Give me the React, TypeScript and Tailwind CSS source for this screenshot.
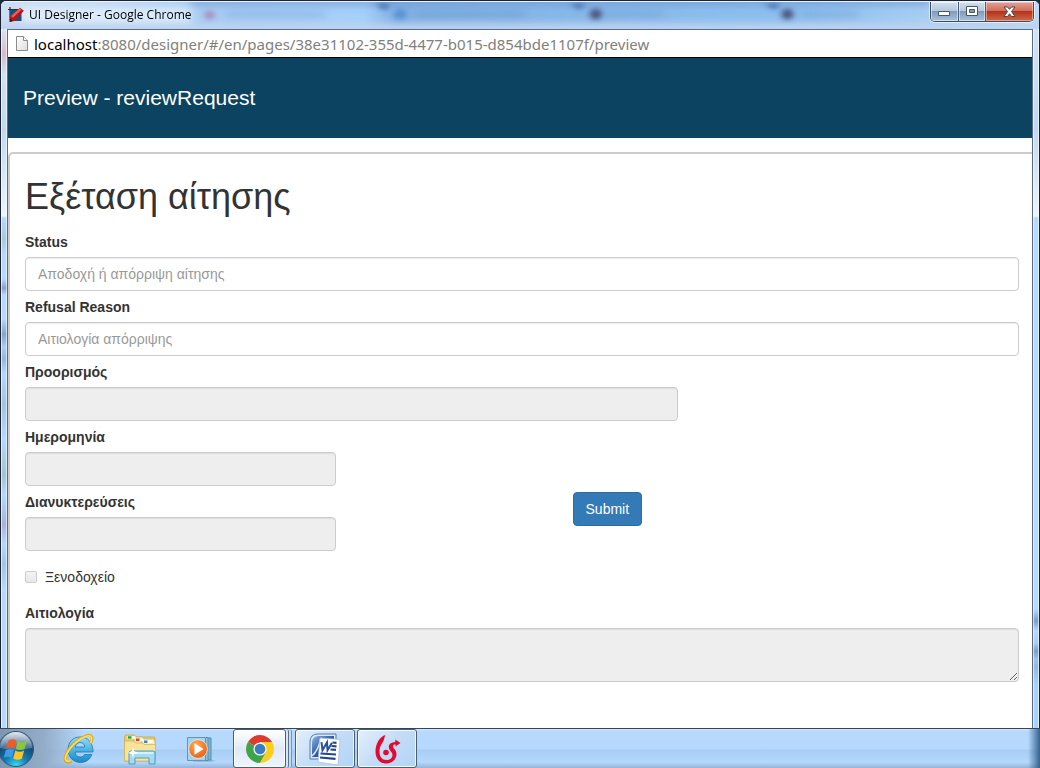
import { useState, type ReactNode } from "react";

const inputClass =
  "block h-[34px] w-full rounded border border-[#cccccc] px-3 text-sm text-[#555555] shadow-[inset_0_1px_1px_rgba(0,0,0,0.075)] outline-none placeholder:text-[#999999] disabled:bg-[#eeeeee]";

type FieldProps = {
  id: string;
  label: string;
  placeholder?: string;
  disabled?: boolean;
};

function Field({ id, label, placeholder, disabled = false }: FieldProps) {
  const [value, setValue] = useState("");

  return (
    <div>
      <label htmlFor={id} className="mb-[5px] block text-sm font-bold">
        {label}
      </label>
      <input
        id={id}
        type="text"
        value={value}
        placeholder={placeholder}
        disabled={disabled}
        onChange={(e) => setValue(e.target.value)}
        className={inputClass}
      />
    </div>
  );
}

function DesignerIcon() {
  return (
    <svg width="16" height="16" viewBox="0 0 16 16">
      <path d="M2 0v13M0 2.500h14" stroke="#26333f" strokeWidth="1.200" fill="none" />
      <rect x="2" y="3" width="11.500" height="11" fill="#1f4f74" />
      <path d="M1.500 15l.8-5.500L12 .8l3.800 3L6.500 14z" fill="#b91519" />
      <path d="M3 9L11.800 1.300l1.700 1.500L4.800 10.800z" fill="#ef5d57" />
      <path d="M1.500 15l.6-3.500 2.700 2.500z" fill="#3a1717" />
    </svg>
  );
}

function PageIcon() {
  return (
    <svg width="12" height="16" viewBox="0 0 12 16">
      <defs>
        <linearGradient id="sheet" x1="0" y1="0" x2="1" y2="1">
          <stop offset="0" stopColor="#fff" />
          <stop offset="1" stopColor="#dedede" />
        </linearGradient>
      </defs>
      <path d="M.5 .5h7l4 4v10H.5z" fill="url(#sheet)" stroke="#8b8b8b" />
      <path d="M7.500 .5v4h4" fill="#fff" stroke="#8b8b8b" />
    </svg>
  );
}

// The windows behind show through the glass as soft blobs
function GlassBackdrop() {
  return (
    <svg
      className="absolute inset-0 h-full w-full"
      viewBox="0 0 1040 29"
      preserveAspectRatio="none"
      aria-hidden="true"
    >
      <defs>
        <filter id="soft" x="-20%" y="-100%" width="140%" height="300%">
          <feGaussianBlur stdDeviation="4" />
        </filter>
        <filter id="dot" x="-100%" y="-100%" width="300%" height="300%">
          <feGaussianBlur stdDeviation="3" />
        </filter>
        <linearGradient id="glass" x1="0" y1="0" x2="1" y2="0">
          <stop offset="0" stopColor="#cfdff2" />
          <stop offset="0.100" stopColor="#c3daf4" />
          <stop offset="0.200" stopColor="#a9cdf3" />
          <stop offset="0.350" stopColor="#a5d0fa" />
          <stop offset="0.380" stopColor="#83b2e5" />
          <stop offset="0.780" stopColor="#8fc1f0" />
          <stop offset="0.880" stopColor="#a5cdf3" />
          <stop offset="1" stopColor="#c0d9f2" />
        </linearGradient>
      </defs>
      <rect width="1040" height="29" fill="url(#glass)" />
      <g filter="url(#soft)">
        <rect x="190" y="-3" width="740" height="7" fill="#7199d2" opacity="0.700" />
        <rect x="-10" y="23" width="1060" height="12" fill="#bdd3f0" />
        <rect x="415" y="10" width="110" height="7" fill="#6796cd" opacity="0.500" />
        <rect x="605" y="10" width="60" height="7" fill="#6796cd" opacity="0.400" />
        <rect x="800" y="10" width="60" height="7" fill="#6796cd" opacity="0.400" />
        <rect x="225" y="10" width="100" height="7" fill="#7ca8dd" opacity="0.500" />
        <rect x="20" y="6" width="170" height="16" fill="#e4f0fc" opacity="0.800" />
      </g>
      <g filter="url(#dot)">
        <circle cx="209" cy="14" r="5" fill="#a48ac0" />
        <circle cx="400" cy="13" r="6" fill="#5c8dd2" />
        <circle cx="596" cy="13" r="6" fill="#49517d" />
        <circle cx="788" cy="13" r="6" fill="#49517d" />
        <path d="M375 2h15l-5 7zM570 2h16l-6 6zM765 2h16l-6 6z" fill="#3c69a7" />
      </g>
    </svg>
  );
}

function WindowButtons() {
  const glass =
    "bg-[linear-gradient(#d3dfec_0%,#b6c8dc_45%,#819bb9_50%,#a9c2dd_100%)]";

  return (
    <div className="relative mr-[5px] flex h-5 overflow-hidden rounded-b-[5px] border border-t-0 border-[#3d4c62] shadow-[0_0_0_1px_rgba(255,255,255,0.6)]">
      <button
        aria-label="Minimize"
        className={`flex w-7 items-center justify-center border-r border-[#4b5c74] shadow-[inset_0_0_0_1px_rgba(255,255,255,0.5)] ${glass}`}
      >
        <svg width="13" height="11" viewBox="0 0 13 11">
          <path d="M.5 5.500h11v4H.5z" fill="#fff" stroke="#4c5766" />
        </svg>
      </button>
      <button
        aria-label="Maximize"
        className={`flex w-[27px] items-center justify-center border-r border-[#4b5c74] shadow-[inset_0_0_0_1px_rgba(255,255,255,0.5)] ${glass}`}
      >
        <svg width="13" height="11" viewBox="0 0 13 11">
          <path d="M.5 .5h11v9H.5z" fill="#fff" stroke="#4c5766" />
          <path d="M3.500 3.500h5v3h-5z" fill="#7f9cc0" stroke="#4c5766" />
        </svg>
      </button>
      <button
        aria-label="Close"
        className="flex w-[47px] items-center justify-center bg-[linear-gradient(#e2a297_0%,#d1705c_45%,#b3341c_50%,#cd6a45_100%)] shadow-[inset_0_0_0_1px_rgba(255,255,255,0.4)]"
      >
        <svg width="13" height="12" viewBox="0 0 13 12">
          <path
            d="M1 1h3.500l2 2.300L8.500 1H12L8.500 5.500 12 10.500H8.500l-2-2.700-2 2.700H1l3.500-5z"
            fill="#fff"
            stroke="#53434e"
          />
        </svg>
      </button>
    </div>
  );
}

function StartOrb() {
  return (
    <svg width="36" height="38" viewBox="0 0 36 38">
      <defs>
        <radialGradient id="orb" cx=".5" cy="1" r=".95">
          <stop offset="0" stopColor="#3fe0fa" />
          <stop offset=".35" stopColor="#137fb4" />
          <stop offset=".7" stopColor="#164a78" />
          <stop offset="1" stopColor="#7795ae" />
        </radialGradient>
        <linearGradient id="orbShine" x1="0" y1="0" x2="0" y2="1">
          <stop offset="0" stopColor="#e9f0f6" stopOpacity=".9" />
          <stop offset="1" stopColor="#9db3c6" stopOpacity=".3" />
        </linearGradient>
      </defs>
      <circle cx="16" cy="19" r="17.500" fill="url(#orb)" stroke="#34536e" />
      <path d="M0 18A16 16 0 0 1 32 18Q16 22 0 18z" fill="url(#orbShine)" />
      <path d="M8.500 10.500q4-2.500 8 0l-2 8q-4-2.200-8.300.2z" fill="#ef5a29" />
      <path d="M17.800 11q4.500 2.500 9-.3l-2.300 8.200q-4.300 2.400-8.700-.2z" fill="#8cc63f" />
      <path d="M5.800 20.200q4-2.500 8.200-.2l-2.200 8q-3.800-2.300-8-.2z" fill="#3f9be5" />
      <path d="M15.300 20.500q4.400 2.500 8.800.1l-2.200 8.200q-4.300 2.200-8.700-.3z" fill="#fdc525" />
    </svg>
  );
}

function ExplorerIcon() {
  return (
    <svg width="32" height="32" viewBox="0 0 32 32">
      <defs>
        <linearGradient id="ie" x1="0" y1="0" x2="0" y2="1">
          <stop offset="0" stopColor="#8ddcfa" />
          <stop offset="1" stopColor="#1589cc" />
        </linearGradient>
      </defs>
      <path
        d="M17 4C9.500 4 5 9.500 5 16.500S10 29.500 17.500 29.500c5.500 0 9.500-3 11.300-8h-7.300c-1 1.700-2.300 2.500-4.300 2.500-3 0-5-2-5.200-5h18C30 9.500 25 4 17 4zM12.200 14c.5-2.800 2.300-4.500 4.900-4.500s4.300 1.700 4.600 4.500z"
        fill="url(#ie)"
        stroke="#1578b6"
        strokeWidth=".8"
      />
      <path
        d="M27.500 10.500C31 4 28.500 .8 22.500 3 14.500 6 5.500 14 2.500 23c-1.700 5.300.8 7.500 6.200 5"
        fill="none"
        stroke="#e6a50b"
        strokeWidth="2.800"
      />
      <path
        d="M27.500 10C30.300 4.200 28 1.500 22.500 3.500 14.500 6.500 6 14.500 2.800 23c-1.400 4.500.6 6.200 5.400 4.600"
        fill="none"
        stroke="#ffe25c"
        strokeWidth="1.500"
      />
    </svg>
  );
}

function FoldersIcon() {
  return (
    <svg width="32" height="32" viewBox="0 0 32 32">
      <path d="M.5 4q0-2 2-2h8L12 4h18q1 0 1 1v23H.5z" fill="#e9cd72" stroke="#c5a13f" strokeWidth=".7" />
      <path d="M10 4h9l1 3h10v18H10z" fill="#f6e4a0" stroke="#c8a84e" strokeWidth=".6" />
      <path d="M18 6h12l1 3v16H18z" fill="#fbeeb9" stroke="#c8a84e" strokeWidth=".6" />
      <path d="M.5 8h9l2 2h7l2 1.500H31.500V28H.5z" fill="#f8e39a" stroke="#cfaf57" strokeWidth=".7" />
      <path d="M3.500 3.200h8v2.500h-8z" fill="#fff" />
      <path d="M4 3.200h3.500v2.500H4z" fill="#1fae36" />
      <path d="M11.500 5.500h8V8h-8z" fill="#fff" />
      <path d="M12 5.500h3.500V8H12z" fill="#d7402b" />
      <path d="M19.500 7.500h9V10h-9z" fill="#fff" />
      <path d="M20 7.500h3.500V10H20z" fill="#2e8ad8" />
      <path d="M5 31V20q0-2 2-2h22q2 0 2 2v11h-6v-6H11v6z" fill="#a6daef" stroke="#4c9cc5" />
      <path d="M6.500 20h23" stroke="#e4f8ff" strokeWidth="1.500" />
      <path d="M9 14l1 4 4 2-4 1-1 4-1-4-4-1 4-2z" fill="#fff" />
    </svg>
  );
}

function MediaIcon() {
  return (
    <svg width="32" height="32" viewBox="0 0 32 32">
      <defs>
        <radialGradient id="play" cx=".4" cy=".3" r=".8">
          <stop offset="0" stopColor="#ffae55" />
          <stop offset="1" stopColor="#e5560c" />
        </radialGradient>
      </defs>
      <path d="M8 27h23l-4 2H8z" fill="#7390ad" opacity=".4" />
      <path d="M9 5h17v22H9z" fill="#7ab5d4" stroke="#548eae" />
      <path d="M6 4.500h17v23H6z" fill="#8fc6e0" stroke="#548eae" />
      <path d="M2.500 4.500h18v23h-18z" fill="#a5d4ea" stroke="#6098b6" />
      <circle cx="13" cy="16" r="9.300" fill="url(#play)" stroke="#fff" strokeWidth=".6" />
      <path d="M9.500 10.200l9 5.800-9 5.800z" fill="#fff" />
    </svg>
  );
}

function ChromeIcon() {
  return (
    <svg width="30" height="30" viewBox="0 0 30 30">
      <path d="M15 15L2.900 8A14 14 0 0 1 27.100 8H15z" fill="#dc3b2e" />
      <path d="M15 15L2.900 8A14 14 0 0 0 15 29l6-10.500z" fill="#3fa447" />
      <path d="M15 8h12.100A14 14 0 0 1 15 29l6.100-10.500z" fill="#fccd1b" />
      <circle cx="15" cy="15" r="6.600" fill="#f3f6f8" />
      <circle cx="15" cy="15" r="5.300" fill="#3b7dc4" />
    </svg>
  );
}

function WordIcon() {
  return (
    <svg width="34" height="34" viewBox="0 0 34 34">
      <defs>
        <linearGradient id="word" x1="0" y1="0" x2="1" y2="1">
          <stop offset="0" stopColor="#8db4e6" />
          <stop offset=".5" stopColor="#2f5ba8" />
          <stop offset="1" stopColor="#24468c" />
        </linearGradient>
      </defs>
      <path d="M2 27V10q0-8 8-8h18v25z" fill="#dbe8f8" stroke="#5577b5" />
      <path d="M4 25V11q0-7 7-7h15v21z" fill="url(#word)" />
      <path d="M4 24q6-5 9-18" fill="none" stroke="#dce9f9" strokeWidth="1.500" />
      <path d="M12 6l20 1.500-2 25.500-20-3z" fill="#fff" stroke="#aebfd8" strokeWidth=".8" />
      <path d="M13.500 10.200l1 8 4.500-7.800.5 7.800 4.500-7.500" fill="none" stroke="#284f9b" strokeWidth="2" />
      <path
        d="M24.500 10.500l4 .3M23.500 14l5 .3M22.500 17.500l5.500.4M12.500 21.500l15.500 1M12 25.500l15.500 1.300"
        stroke="#24468c"
        strokeWidth="2.200"
      />
    </svg>
  );
}

function BonitaIcon() {
  return (
    <svg width="28" height="32" viewBox="0 0 28 32">
      <path
        d="M12.500 2C6.500 3.500 2.500 11 2.500 18.500 2.500 26 7 30.500 13 30.500c6 0 10.500-4 10.500-9.500 0-4.500-3.800-5.500-3.500-8 .2-1.200 1.200-1.700 2.500-1.800v2.300l5-3.500-5.200-3.500V9c-4.300.2-6.500 2-6.500 5 0 4 3.700 4.500 3.700 8 0 3-2.700 5-6 5C9 27 6.500 24 6.500 18.500c0-6 3.500-8.500 4.500-12C11.600 4.500 11.800 3 12.500 2z"
        fill="#e30a30"
      />
      <circle cx="13" cy="19.500" r="2.800" fill="#e30a30" />
    </svg>
  );
}

function TaskButton({ label, active, children }: { label: string; active?: boolean; children: ReactNode }) {
  const tone = active
    ? "bg-[linear-gradient(#ffffff,#dfe9f5_50%,#eef5fd)]"
    : "bg-[linear-gradient(135deg,#e3effc,#c3dcf7_50%,#b3d4f6)]";

  return (
    <button
      aria-label={label}
      className={`flex h-[39px] items-center justify-center rounded-[3px] border border-[#4a5d73] shadow-[inset_0_0_0_1px_rgba(255,255,255,0.8)] ${active ? "w-[53px]" : "w-[60px]"} ${tone}`}
    >
      {children}
    </button>
  );
}

function Taskbar() {
  return (
    <footer className="flex h-10 border-t border-[#34455c] bg-[linear-gradient(#d6e9fd_0,#b7d9fc_2px,#b5d8fc_50%,#a9cdf3_55%,#b5d8fd_85%,#95b4d6)]">
      <div className="flex w-full items-center bg-[linear-gradient(90deg,#7e96af_0,#94aeca_45px,transparent_85px,transparent_calc(100%-12px),#35628f)]">
        <button aria-label="Start" className="mr-[27px]">
          <StartOrb />
        </button>
        <div className="flex items-center gap-[29px]">
          <button aria-label="Internet Explorer">
            <ExplorerIcon />
          </button>
          <button aria-label="Windows Explorer">
            <FoldersIcon />
          </button>
          <button aria-label="Media Player">
            <MediaIcon />
          </button>
        </div>
        <div className="ml-4 flex items-center gap-[2px]">
          <div className="flex pr-px">
            <TaskButton label="Google Chrome" active>
              <ChromeIcon />
            </TaskButton>
            <span className="h-[39px] w-[3px] rounded-r border-r border-[#5b7088] bg-[#d5e6f8]" />
            <span className="h-[39px] w-[3px] rounded-r border-r border-[#7a92ad] bg-[#c5dcf5]" />
          </div>
          <TaskButton label="Microsoft Word">
            <WordIcon />
          </TaskButton>
          <TaskButton label="Bonita">
            <BonitaIcon />
          </TaskButton>
        </div>
      </div>
    </footer>
  );
}

function ReviewForm() {
  const [note, setNote] = useState("");

  return (
    <form
      onSubmit={(e) => e.preventDefault()}
      className="-mr-1 mt-[14px] flex-1 rounded-t-[5px] border-2 border-b-0 border-[#cccccc] px-[15px] pb-10 text-[#333333]"
    >
      <h1 className="mt-[23px] mb-[15px] text-4xl leading-10">Εξέταση αίτησης</h1>

      <div className="flex flex-col gap-[6px]">
        <Field id="status" label="Status" placeholder="Αποδοχή ή απόρριψη αίτησης" />
        <Field id="refusal" label="Refusal Reason" placeholder="Αιτιολογία απόρριψης" />

        <div className="grid grid-cols-12 gap-x-[30px]">
          <div className="col-span-8">
            <Field id="destination" label="Προορισμός" disabled />
          </div>
        </div>
        <div className="grid grid-cols-12 gap-x-[30px]">
          <div className="col-span-4">
            <Field id="date" label="Ημερομηνία" disabled />
          </div>
        </div>
        <div className="grid grid-cols-12 gap-x-[30px]">
          <div className="col-span-4">
            <Field id="nights" label="Διανυκτερεύσεις" disabled />
          </div>
          <div className="col-span-6 text-center">
            <button
              type="submit"
              className="h-[34px] rounded border border-[#2e6da4] bg-[#337ab7] px-3 text-sm text-white hover:bg-[#286090]"
            >
              Submit
            </button>
          </div>
        </div>
      </div>

      <label className="my-4 flex items-center gap-2 text-sm">
        <input
          type="checkbox"
          disabled
          className="h-3 w-3 appearance-none rounded-[2px] border border-[#cccccc] bg-linear-to-b from-[#f4f4f4] to-[#e8e8e8]"
        />
        Ξενοδοχείο
      </label>

      <label htmlFor="justification" className="mb-[5px] block text-sm font-bold">
        Αιτιολογία
      </label>
      <textarea
        id="justification"
        rows={2}
        disabled
        value={note}
        onChange={(e) => setNote(e.target.value)}
        className="block h-[54px] w-full resize-y rounded border border-[#cccccc] bg-[#eeeeee] px-3 py-[6px] text-sm shadow-[inset_0_1px_1px_rgba(0,0,0,0.075)]"
      />
    </form>
  );
}

export default function App() {
  return (
    <div className="flex min-h-screen flex-col bg-[#1c2b40] font-['Liberation_Sans',Arial,sans-serif]">
      <div className="flex flex-1 flex-col overflow-hidden rounded-t-[6px] border-x border-t border-[#1a2233] bg-[#b7d9fc]">
        {/* Title bar */}
        <div className="relative h-7 overflow-hidden border-t border-white/70">
          <GlassBackdrop />
          <div className="relative flex items-start justify-between">
            <div className="flex items-center gap-[5px] pt-[5px] pl-[7px]">
              <DesignerIcon />
              <span className="font-['Open_Sans',sans-serif] text-xs leading-4 text-black">
                UI Designer - Google Chrome
              </span>
            </div>
            <WindowButtons />
          </div>
        </div>

        {/* Frame round the page */}
        <div className="flex flex-1">
          <div className="w-[6px] border-x border-white/60 bg-[linear-gradient(#dbe5f3_0,#d9b9c8_25px,#d0e2f5_45px,#c0d8f2_100px,#edf5fd_187px,#b5d9ff_189px,#a7c9dd_210px,#b5d9ff_225px,#b5d9ff_250px,#8c9fc2_259px,#b5d9ff_266px,#b5d9ff_290px,#7fa6cf_305px,#a9cdf3_318px,#93b7e0_330px,#b5d9ff_345px,#9ec6e0_375px,#b5d9ff_410px,#a0c4cf_446px,#b5d9ff_466px,#a5b4d8_495px,#b5d9ff_515px,#a0c3e6_535px,#b5d9ff_560px)]" />
          <div className="flex min-w-0 flex-1 flex-col overflow-hidden border-x border-t border-[#5a6b7f] bg-white">
            <div className="flex h-7 items-center gap-[6px] border-b border-black pl-2">
              <PageIcon />
              <div className="font-['Noto_Sans',sans-serif] text-[15px] leading-7 text-[#808080]">
                <span className="text-black">localhost</span>
                :8080/designer/#/en/pages/38e31102-355d-4477-b015-d854bde1107f/preview
              </div>
            </div>
            <header className="flex h-20 items-center bg-[#0c4360] px-[15px]">
              <h2 className="text-[21px] leading-6 text-white">Preview - reviewRequest</h2>
            </header>
            <ReviewForm />
          </div>
          <div className="w-[6px] border-x border-white/60 bg-[linear-gradient(#d0e2f5_0,#c0d8f2_100px,#edf5fd_187px,#b5d9ff_189px,#b5d9ff_580px,#7c9fc5_592px,#b5d9ff_602px,#a9cdf3_614px,#7c9fc5_622px,#9dc1e8_630px,#94b8de_638px,#a5d3ff_655px)]" />
        </div>
      </div>
      <Taskbar />
    </div>
  );
}
